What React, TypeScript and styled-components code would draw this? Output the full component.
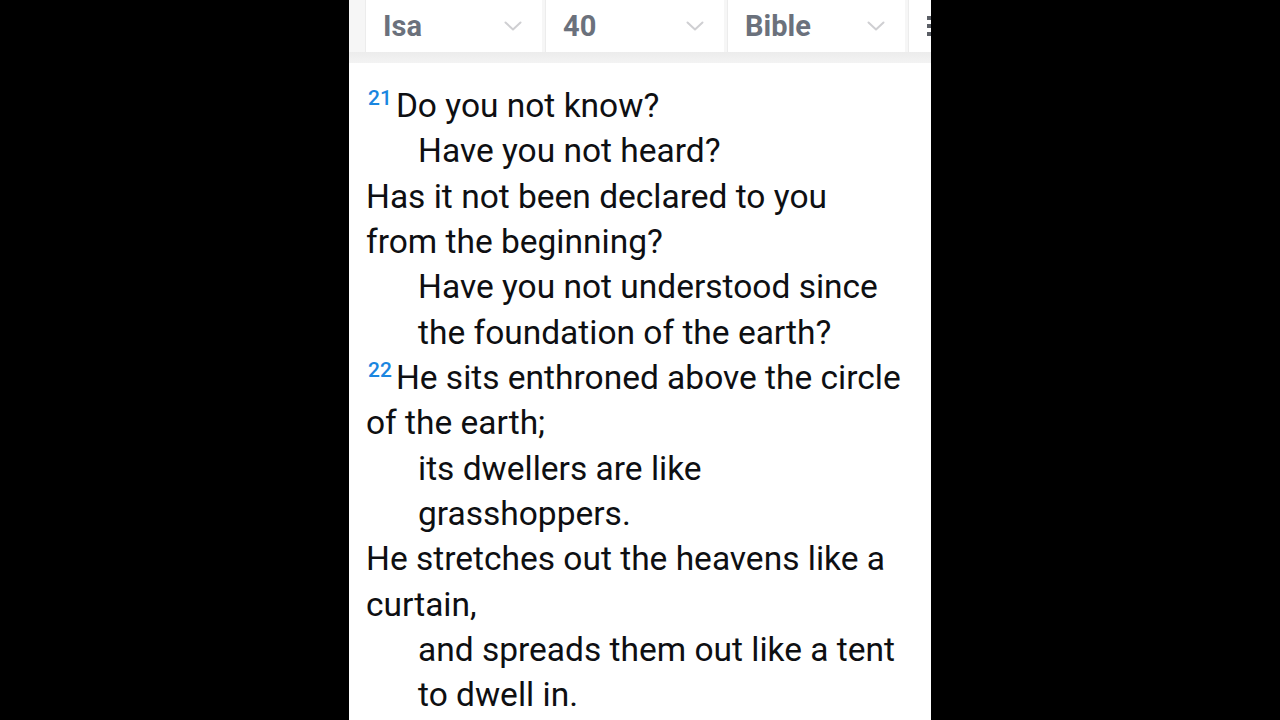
import React from "react";
import styled, { createGlobalStyle } from "styled-components";

const Global = createGlobalStyle`
  html, body { margin: 0; padding: 0; background: #000; }
  body { font-family: Roboto, "Noto Sans", sans-serif; }
`;

const Stage = styled.div`
  width: 1280px;
  height: 720px;
  display: flex;
  justify-content: center;
  background: #000;
  overflow: hidden;
`;

const Panel = styled.div`
  width: 582px;
  height: 720px;
  background: #fff;
  overflow: hidden;
  display: flex;
  flex-direction: column;
`;

const Header = styled.div`
  display: flex;
  gap: 3px;
  height: 52px;
  padding-left: 16px;
  background: #f6f6f6;
  flex-shrink: 0;
`;

const Cell = styled.div<{ $w: number }>`
  width: ${(p) => p.$w}px;
  flex-shrink: 0;
  background: #fff;
  border-left: 1px solid #ececec;
  display: flex;
  align-items: center;
  justify-content: space-between;
  padding: 0 20px 0 17px;
  box-sizing: border-box;
  font-size: 29px;
  font-weight: 700;
  color: #6b717c;
`;

const Label = styled.span`
  line-height: 1;
`;

const MenuCell = styled.div`
  width: 40px;
  flex-shrink: 0;
  background: #fff;
  border-left: 1px solid #ececec;
  display: flex;
  align-items: center;
  padding-left: 18px;
  box-sizing: border-box;
`;

const Shadow = styled.div`
  height: 11px;
  flex-shrink: 0;
  background: linear-gradient(#ececec, #f3f3f3);
`;

const Body = styled.div`
  padding: 20px 0 0 17px;
  font-size: 33.5px;
  line-height: 45.33px;
  color: #0e0f12;
`;

const Line = styled.div<{ $indent: boolean }>`
  white-space: nowrap;
  padding-left: ${(p) => (p.$indent ? 52 : 0)}px;
`;

const VerseNum = styled.sup`
  font-size: 21px;
  color: #1a86e0;
  vertical-align: top;
  line-height: 1;
  position: relative;
  top: 5px;
  margin-left: 2px;
  margin-right: 4px;
  font-weight: 500;
`;

const Chevron = () => (
  <svg width="18" height="12" viewBox="0 0 18 12" fill="none">
    <path d="M1.5 2.5 L9 9.5 L16.5 2.5" stroke="#cfcfd2" strokeWidth="2" strokeLinecap="round" strokeLinejoin="round" />
  </svg>
);

const Dots = () => (
  <svg width="6" height="24" viewBox="0 0 6 24">
    <rect x="0" y="2" width="5" height="4" fill="#5b5f66" />
    <rect x="0" y="10" width="5" height="4" fill="#5b5f66" />
    <rect x="0" y="18" width="5" height="4" fill="#5b5f66" />
  </svg>
);

type L = { t: string; i?: boolean; v?: string };

const lines: L[] = [
  { v: "21", t: "Do you not know?" },
  { i: true, t: "Have you not heard?" },
  { t: "Has it not been declared to you" },
  { t: "from the beginning?" },
  { i: true, t: "Have you not understood since" },
  { i: true, t: "the foundation of the earth?" },
  { v: "22", t: "He sits enthroned above the circle" },
  { t: "of the earth;" },
  { i: true, t: "its dwellers are like" },
  { i: true, t: "grasshoppers." },
  { t: "He stretches out the heavens like a" },
  { t: "curtain," },
  { i: true, t: "and spreads them out like a tent" },
  { i: true, t: "to dwell in." },
];

export default function App() {
  return (
    <>
      <Global />
      <Stage>
        <Panel>
          <Header>
            <Cell $w={177}>
              <Label>Isa</Label>
              <Chevron />
            </Cell>
            <Cell $w={179}>
              <Label>40</Label>
              <Chevron />
            </Cell>
            <Cell $w={178}>
              <Label>Bible</Label>
              <Chevron />
            </Cell>
            <MenuCell>
              <Dots />
            </MenuCell>
          </Header>
          <Shadow />
          <Body>
            {lines.map((l, k) => (
              <Line key={k} $indent={!!l.i}>
                {l.v && <VerseNum>{l.v}</VerseNum>}
                {l.t}
              </Line>
            ))}
          </Body>
        </Panel>
      </Stage>
    </>
  );
}
